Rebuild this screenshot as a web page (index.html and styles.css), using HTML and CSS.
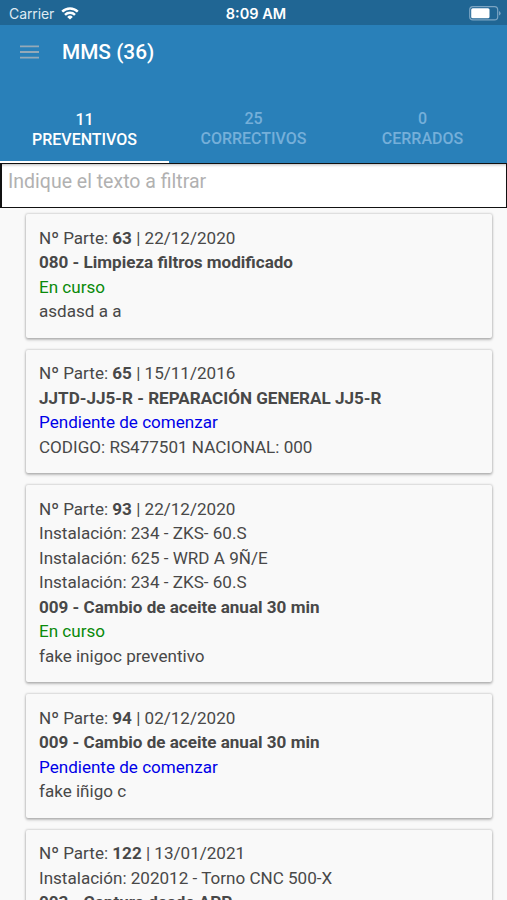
FILE: index.html
```html
<!DOCTYPE html>
<html lang="es">
<head>
<meta charset="utf-8">
<meta name="viewport" content="width=device-width, initial-scale=1">
<title>MMS</title>
<link rel="stylesheet" href="styles.css">
</head>
<body>
<div class="status">
  <div class="carrier"><span>Carrier</span>
    <svg class="wifi" viewBox="0 0 18 13" width="18" height="13" fill="none" stroke="#fff" stroke-width="2.5"><path d="M1.2 4.7a11.2 11.2 0 0 1 15.6 0M4 7.8a7.2 7.2 0 0 1 10 0"/><path d="M9 12.6 6.2 9.9a4 4 0 0 1 5.6 0z" fill="#fff" stroke="none"/></svg>
  </div>
  <div class="clock">8:09 AM</div>
  <svg class="battery" viewBox="0 0 32 15" width="32" height="15"><rect x=".7" y=".7" width="28" height="13.2" rx="3.2" fill="none" stroke="#7ba5c3" stroke-width="1.2"/><rect x="2.2" y="2.3" width="18.3" height="10" rx="1.5" fill="#fff"/><path d="M30 5v4.6q1.6-.7 1.6-2.3T30 5" fill="#7ba5c3"/></svg>
</div>
<header class="appbar">
  <svg class="menu" viewBox="0 0 20 14" width="20" height="14" stroke="#94a9b8" stroke-width="1.8"><path d="M0 1.4h19M0 7h19M0 12.6h19"/></svg>
  <h1 class="title">MMS (36)</h1>
</header>
<nav class="tabs">
  <div class="tab active"><span>11</span><span>PREVENTIVOS</span></div>
  <div class="tab"><span>25</span><span>CORRECTIVOS</span></div>
  <div class="tab"><span>0</span><span>CERRADOS</span></div>
</nav>
<input class="filter" type="text" placeholder="Indique el texto a filtrar">
<main class="list">
  <article class="card">
    <p>Nº Parte: <b>63</b> | 22/12/2020</p>
    <p><b>080 - Limpieza filtros modificado</b></p>
    <p class="running">En curso</p>
    <p>asdasd a a</p>
  </article>
  <article class="card">
    <p>Nº Parte: <b>65</b> | 15/11/2016</p>
    <p><b>JJTD-JJ5-R - REPARACIÓN GENERAL JJ5-R</b></p>
    <p class="pending">Pendiente de comenzar</p>
    <p>CODIGO: RS477501 NACIONAL: 000</p>
  </article>
  <article class="card">
    <p>Nº Parte: <b>93</b> | 22/12/2020</p>
    <p>Instalación: 234 - ZKS- 60.S</p>
    <p>Instalación: 625 - WRD A 9Ñ/E</p>
    <p>Instalación: 234 - ZKS- 60.S</p>
    <p><b>009 - Cambio de aceite anual 30 min</b></p>
    <p class="running">En curso</p>
    <p>fake inigoc preventivo</p>
  </article>
  <article class="card">
    <p>Nº Parte: <b>94</b> | 02/12/2020</p>
    <p><b>009 - Cambio de aceite anual 30 min</b></p>
    <p class="pending">Pendiente de comenzar</p>
    <p>fake iñigo c</p>
  </article>
  <article class="card">
    <p>Nº Parte: <b>122</b> | 13/01/2021</p>
    <p>Instalación: 202012 - Torno CNC 500-X</p>
    <p><b>003 - Captura desde APP</b></p>
  </article>
</main>
</body>
</html>
```
FILE: styles.css
```css
* { box-sizing: border-box; }
html, body { height: 900px; overflow: hidden; }
body {
  margin: 0;
  display: flex;
  flex-direction: column;
  background: #f9f9f9;
  color: #484848;
  font-family: Roboto, sans-serif;
}
.status {
  flex: none;
  height: 25px;
  display: grid;
  grid-template-columns: 1fr auto 1fr;
  align-items: center;
  padding: 2px 6px 0 9px;
  background: #206694;
  color: #fff;
  font: 14px/20px Inter, sans-serif;
}
.carrier { display: flex; align-items: center; gap: 7px; color: #dfeaf2; }
.carrier span { letter-spacing: -.1px; }
.clock { margin-left: 2px; font-weight: 600; font-size: 14.5px; }
.battery { justify-self: end; }
.appbar {
  flex: none;
  height: 73px;
  display: flex;
  align-items: flex-start;
  padding: 13px 20px 0;
  background: #2980b9;
}
.menu { margin-top: 7px; }
.title { margin: 0 0 0 22px; color: #fff; font-size: 20.8px; font-weight: 500; line-height: 28px; }
.tabs { flex: none; height: 65px; display: grid; grid-template-columns: repeat(3, 1fr); background: #2980b9; }
.tab {
  display: flex;
  flex-direction: column;
  align-items: center;
  padding-top: 11px;
  color: #75afd9;
  font-size: 16px;
  font-weight: 500;
  line-height: 19.5px;
}
.tab.active { padding-top: 12px; color: #fff; border-bottom: 2px solid #fff; }
.filter {
  flex: none;
  display: block;
  width: 100%;
  height: 45px;
  margin: 0;
  padding: 0 6px 9px;
  border: 1px solid #111;
  border-left-width: 2px;
  border-radius: 0;
  background: #fff;
  box-shadow: inset 0 3px 3px -2px #bbb;
  color: #484848;
  font: 19.5px Roboto, sans-serif;
}
.filter::placeholder { color: #b1b1b1; opacity: 1; }
.list { display: flex; flex-direction: column; gap: 11.6px; padding: 6px 15px 0 26px; }
.card {
  flex: none;
  padding: 11.6px 13px 14.4px;
  border-radius: 2px;
  background: #f9f9f9;
  box-shadow: 0 0 2px 1px rgba(0,0,0,.13), 0 2px 3px rgba(0,0,0,.22);
}
.card p { margin: 0; font-size: 17.07px; line-height: 24.48px; white-space: nowrap; }
.card b { font-weight: 700; }
.card .running { color: #0a8a0a; }
.card .pending { color: #0000e8; }
```
